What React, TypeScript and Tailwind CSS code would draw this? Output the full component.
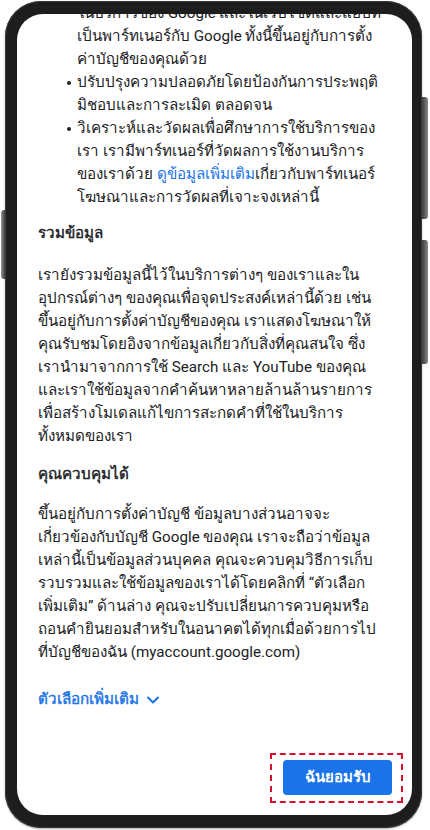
import React from 'react';

const bulletTop = [
  'ในบริการของ Google และในเว็บไซต์และแอปที่',
  'เป็นพาร์ทเนอร์กับ Google ทั้งนี้ขึ้นอยู่กับการตั้ง',
  'ค่าบัญชีของคุณด้วย',
];

const bulletSecurity = ['ปรับปรุงความปลอดภัยโดยป้องกันการประพฤติ', 'มิชอบและการละเมิด ตลอดจน'];

const combineLines = [
  'เรายังรวมข้อมูลนี้ไว้ในบริการต่างๆ ของเราและใน',
  'อุปกรณ์ต่างๆ ของคุณเพื่อจุดประสงค์เหล่านี้ด้วย เช่น',
  'ขึ้นอยู่กับการตั้งค่าบัญชีของคุณ เราแสดงโฆษณาให้',
  'คุณรับชมโดยอิงจากข้อมูลเกี่ยวกับสิ่งที่คุณสนใจ ซึ่ง',
  'เรานำมาจากการใช้ Search และ YouTube ของคุณ',
  'และเราใช้ข้อมูลจากคำค้นหาหลายล้านล้านรายการ',
  'เพื่อสร้างโมเดลแก้ไขการสะกดคำที่ใช้ในบริการ',
  'ทั้งหมดของเรา',
];

const controlLines = [
  'ขึ้นอยู่กับการตั้งค่าบัญชี ข้อมูลบางส่วนอาจจะ',
  'เกี่ยวข้องกับบัญชี Google ของคุณ เราจะถือว่าข้อมูล',
  'เหล่านี้เป็นข้อมูลส่วนบุคคล คุณจะควบคุมวิธีการเก็บ',
  'รวบรวมและใช้ข้อมูลของเราได้โดยคลิกที่ “ตัวเลือก',
  'เพิ่มเติม” ด้านล่าง คุณจะปรับเปลี่ยนการควบคุมหรือ',
  'ถอนคำยินยอมสำหรับในอนาคตได้ทุกเมื่อด้วยการไป',
  'ที่บัญชีของฉัน (myaccount.google.com)',
];

const Lines = ({ lines }: { lines: string[] }) => (
  <>
    {lines.map((line, i) => (
      <div key={i} className="whitespace-nowrap">
        {line}
      </div>
    ))}
  </>
);

const Bullet = ({ children }: { children: React.ReactNode }) => (
  <div className="flex">
    <div className="w-[39px] shrink-0 flex justify-end pr-[6px] pt-[10px]">
      <span className="block w-[4px] h-[4px] rounded-full bg-[#202124]" />
    </div>
    <div>{children}</div>
  </div>
);

export default function App() {
  return (
    <div className="w-[430px] h-[830px] bg-white overflow-hidden">
      <div className="relative ml-[5px] mt-[1px] w-[417px] h-[827px] rounded-[36px] bg-[#1d1d1d] pt-[13px] pb-[13px] pl-[12px] pr-[10px] shadow-[inset_0_0_0_1px_#3a3a3a,0_1px_2px_rgba(0,0,0,0.35)]">
        {/* side keys */}
        <div className="absolute right-[-6px] top-[96px] w-[6px] h-[122px] rounded-r-[3px] bg-gradient-to-r from-[#3b3b3b] to-[#8a8a8a]" />
        <div className="absolute right-[-6px] top-[239px] w-[6px] h-[124px] rounded-r-[3px] bg-gradient-to-r from-[#3b3b3b] to-[#8a8a8a]" />
        <div className="absolute left-[-4px] top-[209px] w-[4px] h-[69px] rounded-l-[3px] bg-gradient-to-l from-[#3b3b3b] to-[#9a9a9a]" />

        <div className="h-full bg-white rounded-[26px] overflow-hidden flex flex-col text-[#202124] text-[15.2px] leading-[23px] font-['Roboto','Noto_Sans',sans-serif]">
          <div className="mt-[-12px] pl-[21px]">
            <div className="pl-[39px]">
              <Lines lines={bulletTop} />
            </div>
            <Bullet>
              <Lines lines={bulletSecurity} />
            </Bullet>
            <Bullet>
              <div className="whitespace-nowrap">วิเคราะห์และวัดผลเพื่อศึกษาการใช้บริการของ</div>
              <div className="whitespace-nowrap">เรา เรามีพาร์ทเนอร์ที่วัดผลการใช้งานบริการ</div>
              <div className="whitespace-nowrap">
                ของเราด้วย <span className="text-[#1a73e8]">ดูข้อมูลเพิ่มเติม</span>เกี่ยวกับพาร์ทเนอร์
              </div>
              <div className="whitespace-nowrap">โฆษณาและการวัดผลที่เจาะจงเหล่านี้</div>
            </Bullet>

            <h3 className="mt-[13px] [-webkit-text-stroke:0.45px_#202124]">รวมข้อมูล</h3>
            <div className="mt-[19px]">
              <Lines lines={combineLines} />
            </div>

            <h3 className="mt-[15px] [-webkit-text-stroke:0.45px_#202124]">คุณควบคุมได้</h3>
            <div className="mt-[17px]">
              <Lines lines={controlLines} />
            </div>

            <button
              type="button"
              className="mt-[24px] flex items-center gap-[8px] text-[#1a73e8] [-webkit-text-stroke:0.45px_#1a73e8]"
            >
              ตัวเลือกเพิ่มเติม
              <svg width="12" height="8" viewBox="0 0 12 8" fill="none">
                <path d="M1 1.5L6 6.5L11 1.5" stroke="#1a73e8" strokeWidth="2" strokeLinecap="round" strokeLinejoin="round" />
              </svg>
            </button>
          </div>

          <div className="flex-1" />

          <div className="flex justify-end pr-[9px] pb-[12px]">
            <div className="border-2 border-dashed border-[#d6102b] pl-[11px] pr-[9px] pt-[5px] pb-[6px]">
              <button
                type="button"
                className="w-[109px] h-[35px] rounded-[4px] bg-[#1a73e8] text-white text-[15px] font-bold flex items-center justify-center"
              >
                ฉันยอมรับ
              </button>
            </div>
          </div>
        </div>
      </div>
    </div>
  );
}
